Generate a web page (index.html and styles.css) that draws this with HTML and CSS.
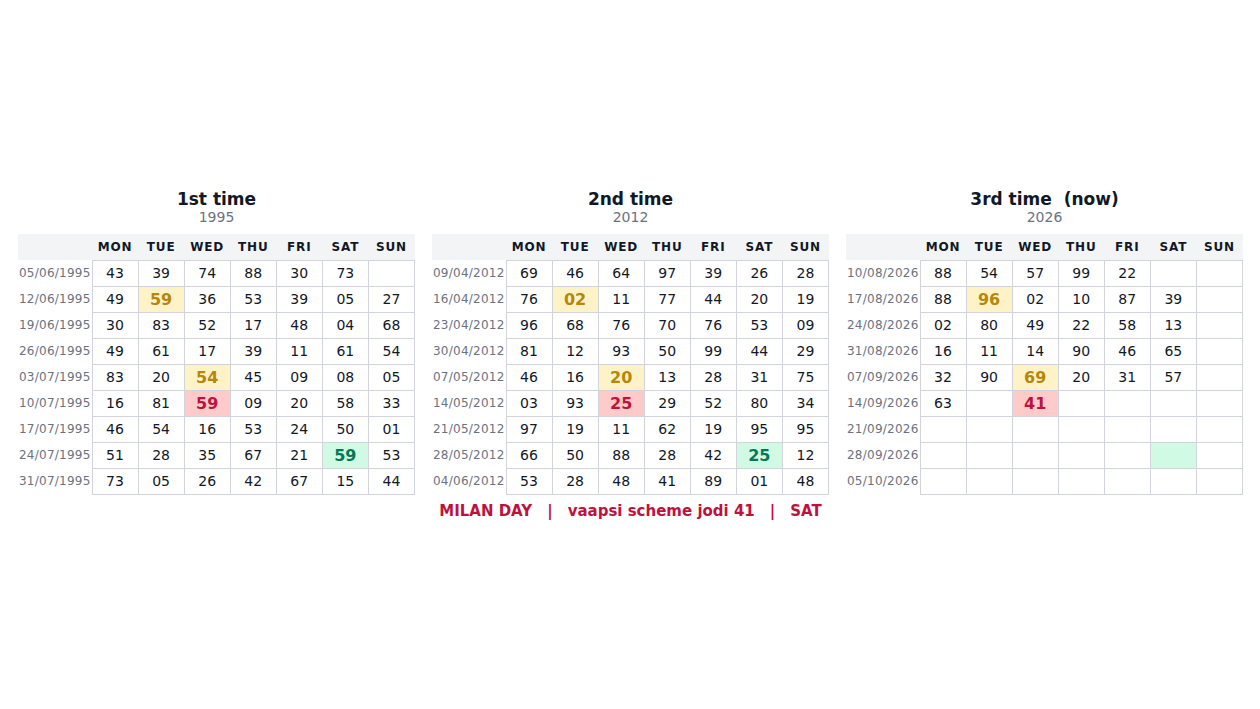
FILE: index.html
```html
<!DOCTYPE html>
<html lang="en">
<head>
<meta charset="utf-8">
<title>Jodi chart</title>
<link rel="stylesheet" href="styles.css">
</head>
<body>
<main class="page">
  <div class="panels">
    <section class="panel">
      <h2 class="panel-title">1st time</h2>
      <div class="panel-year">1995</div>
      <table class="chart">
        <thead>
          <tr><th class="date-h"></th><th>MON</th><th>TUE</th><th>WED</th><th>THU</th><th>FRI</th><th>SAT</th><th>SUN</th></tr>
        </thead>
        <tbody>
          <tr><td class="date">05/06/1995</td><td>43</td><td>39</td><td>74</td><td>88</td><td>30</td><td>73</td><td></td></tr>
          <tr><td class="date">12/06/1995</td><td>49</td><td class="hl-y">59</td><td>36</td><td>53</td><td>39</td><td>05</td><td>27</td></tr>
          <tr><td class="date">19/06/1995</td><td>30</td><td>83</td><td>52</td><td>17</td><td>48</td><td>04</td><td>68</td></tr>
          <tr><td class="date">26/06/1995</td><td>49</td><td>61</td><td>17</td><td>39</td><td>11</td><td>61</td><td>54</td></tr>
          <tr><td class="date">03/07/1995</td><td>83</td><td>20</td><td class="hl-y">54</td><td>45</td><td>09</td><td>08</td><td>05</td></tr>
          <tr><td class="date">10/07/1995</td><td>16</td><td>81</td><td class="hl-r">59</td><td>09</td><td>20</td><td>58</td><td>33</td></tr>
          <tr><td class="date">17/07/1995</td><td>46</td><td>54</td><td>16</td><td>53</td><td>24</td><td>50</td><td>01</td></tr>
          <tr><td class="date">24/07/1995</td><td>51</td><td>28</td><td>35</td><td>67</td><td>21</td><td class="hl-g">59</td><td>53</td></tr>
          <tr><td class="date">31/07/1995</td><td>73</td><td>05</td><td>26</td><td>42</td><td>67</td><td>15</td><td>44</td></tr>
        </tbody>
      </table>
    </section>
    <section class="panel">
      <h2 class="panel-title">2nd time</h2>
      <div class="panel-year">2012</div>
      <table class="chart">
        <thead>
          <tr><th class="date-h"></th><th>MON</th><th>TUE</th><th>WED</th><th>THU</th><th>FRI</th><th>SAT</th><th>SUN</th></tr>
        </thead>
        <tbody>
          <tr><td class="date">09/04/2012</td><td>69</td><td>46</td><td>64</td><td>97</td><td>39</td><td>26</td><td>28</td></tr>
          <tr><td class="date">16/04/2012</td><td>76</td><td class="hl-y">02</td><td>11</td><td>77</td><td>44</td><td>20</td><td>19</td></tr>
          <tr><td class="date">23/04/2012</td><td>96</td><td>68</td><td>76</td><td>70</td><td>76</td><td>53</td><td>09</td></tr>
          <tr><td class="date">30/04/2012</td><td>81</td><td>12</td><td>93</td><td>50</td><td>99</td><td>44</td><td>29</td></tr>
          <tr><td class="date">07/05/2012</td><td>46</td><td>16</td><td class="hl-y">20</td><td>13</td><td>28</td><td>31</td><td>75</td></tr>
          <tr><td class="date">14/05/2012</td><td>03</td><td>93</td><td class="hl-r">25</td><td>29</td><td>52</td><td>80</td><td>34</td></tr>
          <tr><td class="date">21/05/2012</td><td>97</td><td>19</td><td>11</td><td>62</td><td>19</td><td>95</td><td>95</td></tr>
          <tr><td class="date">28/05/2012</td><td>66</td><td>50</td><td>88</td><td>28</td><td>42</td><td class="hl-g">25</td><td>12</td></tr>
          <tr><td class="date">04/06/2012</td><td>53</td><td>28</td><td>48</td><td>41</td><td>89</td><td>01</td><td>48</td></tr>
        </tbody>
      </table>
    </section>
    <section class="panel">
      <h2 class="panel-title">3rd time&nbsp; (now)</h2>
      <div class="panel-year">2026</div>
      <table class="chart">
        <thead>
          <tr><th class="date-h"></th><th>MON</th><th>TUE</th><th>WED</th><th>THU</th><th>FRI</th><th>SAT</th><th>SUN</th></tr>
        </thead>
        <tbody>
          <tr><td class="date">10/08/2026</td><td>88</td><td>54</td><td>57</td><td>99</td><td>22</td><td></td><td></td></tr>
          <tr><td class="date">17/08/2026</td><td>88</td><td class="hl-y">96</td><td>02</td><td>10</td><td>87</td><td>39</td><td></td></tr>
          <tr><td class="date">24/08/2026</td><td>02</td><td>80</td><td>49</td><td>22</td><td>58</td><td>13</td><td></td></tr>
          <tr><td class="date">31/08/2026</td><td>16</td><td>11</td><td>14</td><td>90</td><td>46</td><td>65</td><td></td></tr>
          <tr><td class="date">07/09/2026</td><td>32</td><td>90</td><td class="hl-y">69</td><td>20</td><td>31</td><td>57</td><td></td></tr>
          <tr><td class="date">14/09/2026</td><td>63</td><td></td><td class="hl-r">41</td><td></td><td></td><td></td><td></td></tr>
          <tr><td class="date">21/09/2026</td><td></td><td></td><td></td><td></td><td></td><td></td><td></td></tr>
          <tr><td class="date">28/09/2026</td><td></td><td></td><td></td><td></td><td></td><td class="hl-g"></td><td></td></tr>
          <tr><td class="date">05/10/2026</td><td></td><td></td><td></td><td></td><td></td><td></td><td></td></tr>
        </tbody>
      </table>
    </section>
  </div>
  <p class="footer-note"><span>MILAN DAY</span><span class="sep">|</span><span>vaapsi scheme jodi 41</span><span class="sep">|</span><span>SAT</span></p>
</main>
</body>
</html>
```

FILE: styles.css
```css
* { box-sizing: border-box; }

html, body {
  margin: 0;
  padding: 0;
  background: #ffffff;
}

body {
  font-family: "DejaVu Sans", "Liberation Sans", sans-serif;
  color: #111827;
}

.page {
  height: 709px;
  display: flex;
  flex-direction: column;
  justify-content: center;
  padding: 0 17px 0 18px;
}

.panels {
  display: flex;
  gap: 17px;
}

.panel {
  flex: 1 1 0;
  min-width: 0;
  display: flex;
  flex-direction: column;
  align-items: stretch;
}

.panel-title {
  margin: 0;
  text-align: center;
  font-size: 17px;
  font-weight: 700;
  line-height: 20px;
  color: #111827;
}

.panel-year {
  text-align: center;
  font-size: 14px;
  line-height: 17px;
  color: #6b7280;
  margin-bottom: 8px;
}

.chart {
  width: 100%;
  border-collapse: collapse;
  table-layout: fixed;
}

.chart th {
  background: #f3f4f6;
  height: 26px;
  padding: 0;
  font-size: 12px;
  font-weight: 700;
  letter-spacing: 0.07em;
  color: #111827;
  text-align: center;
}

.chart th.date-h {
  width: 74px;
}

.chart td {
  height: 26px;
  padding: 0;
  border: 1px solid #d1d5db;
  text-align: center;
  font-size: 14px;
  color: #111827;
}

.chart td.date {
  border: none;
  border-right: 1px solid #d1d5db;
  font-size: 12px;
  color: #6b7280;
  text-align: left;
  padding-left: 1px;
  letter-spacing: 0.02em;
  white-space: nowrap;
}

.chart td.hl-y,
.chart td.hl-r,
.chart td.hl-g {
  font-weight: 700;
  font-size: 16px;
}

.chart td.hl-y { background: #fef3c7; color: #b7860b; }
.chart td.hl-r { background: #fecaca; color: #be123c; }
.chart td.hl-g { background: #d1fae5; color: #047857; }

.footer-note {
  margin: 8px 0 0;
  text-align: center;
  font-size: 15px;
  font-weight: 700;
  line-height: 17px;
  color: #be123c;
}

.footer-note .sep {
  margin: 0 15px;
}
```
